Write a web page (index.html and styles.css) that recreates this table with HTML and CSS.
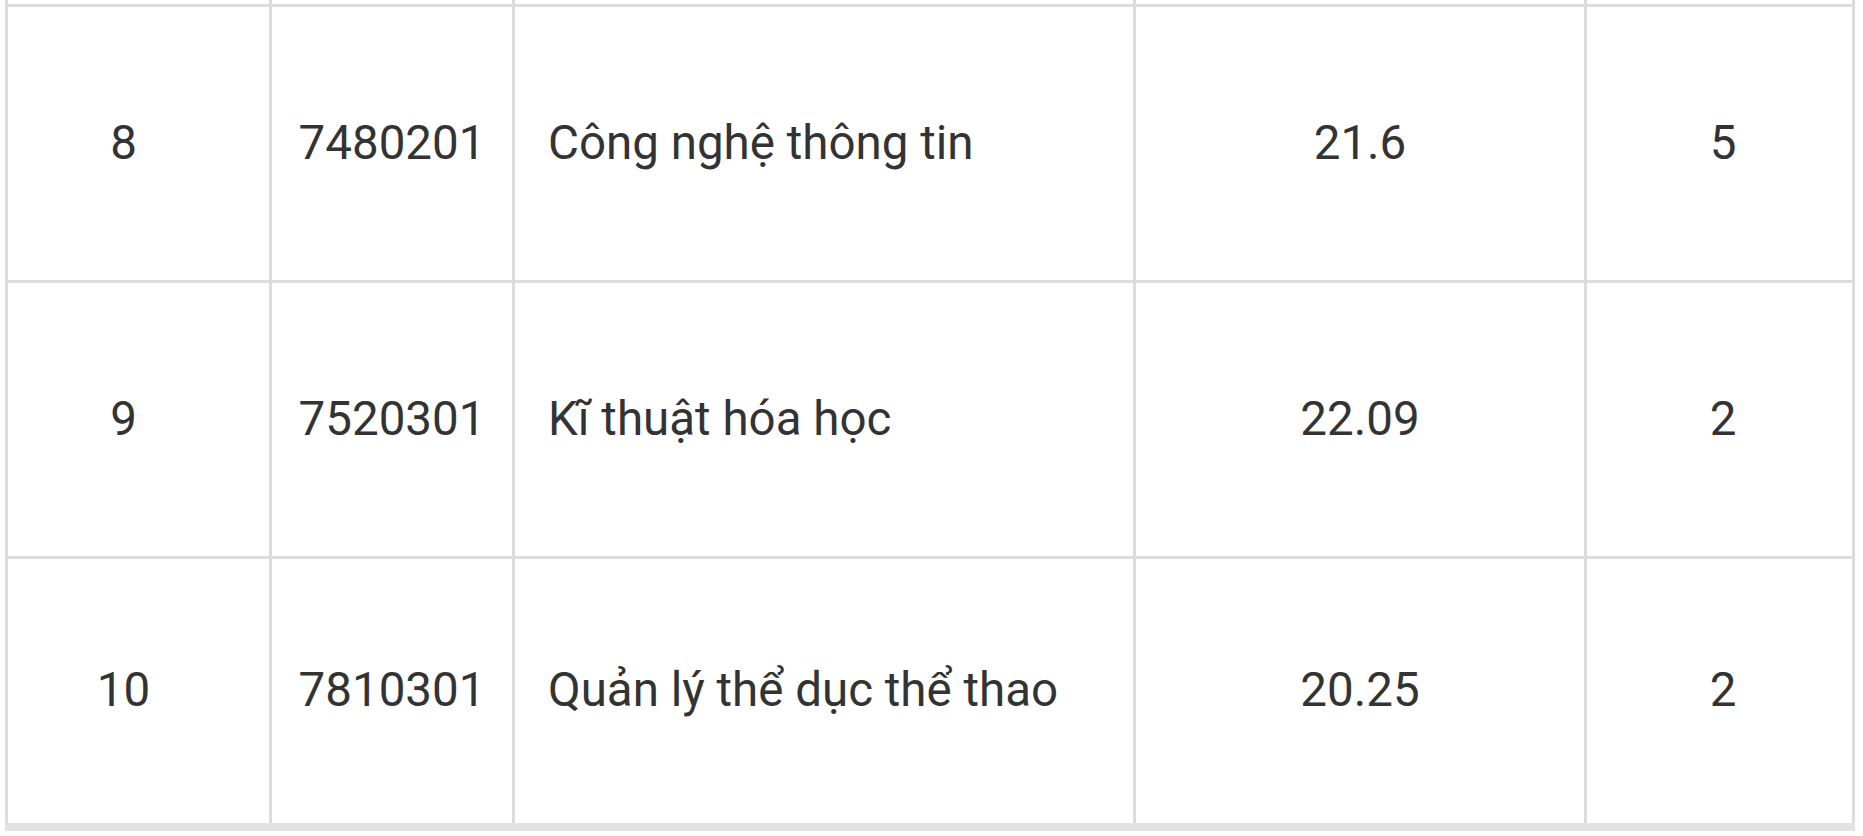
FILE: index.html
```html
<!DOCTYPE html>
<html lang="vi">
<head>
<meta charset="utf-8">
<title>Bảng điểm chuẩn</title>
<link rel="stylesheet" href="styles.css">
</head>
<body>
<div class="table">
  <div class="cell"></div><div class="cell"></div><div class="cell"></div><div class="cell"></div><div class="cell"></div>

  <div class="cell c stt">8</div>
  <div class="cell c">7480201</div>
  <div class="cell l">Công nghệ thông tin</div>
  <div class="cell c">21.6</div>
  <div class="cell c num">5</div>

  <div class="cell c stt">9</div>
  <div class="cell c">7520301</div>
  <div class="cell l">Kĩ thuật hóa học</div>
  <div class="cell c">22.09</div>
  <div class="cell c num">2</div>

  <div class="cell c stt">10</div>
  <div class="cell c">7810301</div>
  <div class="cell l">Quản lý thể dục thể thao</div>
  <div class="cell c">20.25</div>
  <div class="cell c num">2</div>
</div>
</body>
</html>
```
FILE: styles.css
```css
html, body {
  margin: 0;
  padding: 0;
  background: #ffffff;
}

body {
  font-family: Roboto, "Liberation Sans", sans-serif;
  color: #333333;
  width: 1863px;
  height: 836px;
  overflow: hidden;
}

.table {
  margin-left: 5px;
  width: 1850px;
  box-sizing: border-box;
  display: grid;
  grid-template-columns: 261px 240px 618px 448px 265px;
  grid-template-rows: 4px 273px 273px 264px;
  gap: 3px;
  padding: 0 3px;
  background: #dcdcdc;
  border-bottom: 8px solid #e2e2e2;
}

.cell {
  background: #ffffff;
  display: flex;
  align-items: center;
  font-size: 47.5px;
  line-height: 1;
  white-space: nowrap;
}

.c {
  justify-content: center;
}

.stt {
  padding-right: 30px;
}

.num {
  padding-left: 7px;
}

.l {
  justify-content: flex-start;
  padding-left: 33px;
}
```
